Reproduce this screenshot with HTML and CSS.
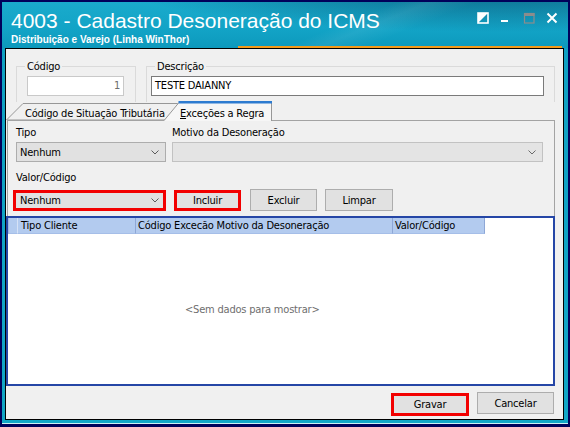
FILE: index.html
```html
<!DOCTYPE html>
<html lang="pt-BR">
<head>
<meta charset="utf-8">
<title>4003 - Cadastro Desoneração do ICMS</title>
<link rel="stylesheet" href="styles.css">
</head>
<body>
<div class="window">
  <header class="titlebar">
    <div class="titles">
      <h1 class="title">4003 - Cadastro Desoneração do ICMS</h1>
      <p class="subtitle">Distribuição e Varejo (Linha WinThor)</p>
    </div>
    <div class="win-controls">
      <svg class="ctl ctl-dock" width="12" height="12" viewBox="0 0 12 12">
        <rect x="1" y="1" width="10" height="10" fill="none" stroke="#fff" stroke-width="1.6"/>
        <polygon points="1,1 11,1 1,11" fill="#fff"/>
      </svg>
      <svg class="ctl ctl-min" width="12" height="12" viewBox="0 0 12 12">
        <rect x="2" y="8" width="7" height="2" fill="#fff"/>
      </svg>
      <svg class="ctl ctl-max" width="12" height="12" viewBox="0 0 12 12">
        <rect x="1.5" y="1.5" width="9.5" height="9.5" fill="none" stroke="#8c8c8c" stroke-width="1.2"/>
        <rect x="1" y="1" width="10.5" height="3" fill="#8c8c8c"/>
      </svg>
      <svg class="ctl ctl-close" width="12" height="12" viewBox="0 0 12 12">
        <path d="M1.5 1.5 L10.5 10.5 M10.5 1.5 L1.5 10.5" stroke="#fff" stroke-width="2" fill="none"/>
      </svg>
    </div>
  </header>

  <main class="client">
    <div class="header-fields">
      <fieldset class="group group-code">
        <legend>Código</legend>
        <div class="edit edit-readonly">1</div>
      </fieldset>
      <fieldset class="group group-desc">
        <legend>Descrição</legend>
        <div class="edit">TESTE DAIANNY</div>
      </fieldset>
    </div>

    <div class="tabstrip">
      <div class="tab tab-first">Código de Situação Tributária</div>
      <div class="tab tab-active"><span class="accel">E</span>xceções a Regra</div>
    </div>

    <section class="tabpage">
      <div class="form-row">
        <div class="field field-tipo">
          <label>Tipo</label>
          <div class="combo"><span>Nenhum</span>
            <svg class="chev" width="8" height="5" viewBox="0 0 8 5"><path d="M0.5 0.5 L4 4 L7.5 0.5" fill="none" stroke="#5a5a5a"/></svg>
          </div>
        </div>
        <div class="field field-motivo">
          <label>Motivo da Desoneração</label>
          <div class="combo combo-disabled"><span></span>
            <svg class="chev" width="8" height="5" viewBox="0 0 8 5"><path d="M0.5 0.5 L4 4 L7.5 0.5" fill="none" stroke="#6a6a6a"/></svg>
          </div>
        </div>
      </div>
      <div class="field field-valor">
        <label>Valor/Código</label>
        <div class="action-row">
          <div class="combo combo-valor hl"><span>Nenhum</span>
            <svg class="chev" width="8" height="5" viewBox="0 0 8 5"><path d="M0.5 0.5 L4 4 L7.5 0.5" fill="none" stroke="#5a5a5a"/></svg>
          </div>
          <button class="btn btn-incluir hl">Incluir</button>
          <button class="btn btn-excluir">Excluir</button>
          <button class="btn btn-limpar">Limpar</button>
        </div>
      </div>
    </section>

    <div class="grid">
      <div class="grid-head">
        <div class="gh gh-ind"></div>
        <div class="gh gh-tipo">Tipo Cliente</div>
        <div class="gh gh-cod">Código Excecão Motivo da Desoneração</div>
        <div class="gh gh-valor">Valor/Código</div>
      </div>
      <div class="grid-body"><span class="empty">&lt;Sem dados para mostrar&gt;</span></div>
    </div>

    <footer class="footer">
      <button class="btn btn-gravar hl">Gravar</button>
      <button class="btn btn-cancelar">Cancelar</button>
    </footer>
  </main>
</div>
</body>
</html>
```

FILE: styles.css
```css
* { box-sizing: border-box; }

html, body { margin: 0; padding: 0; }

body {
  width: 570px;
  height: 427px;
  overflow: hidden;
  background: #00005a;
  font-family: "DejaVu Sans Condensed", "DejaVu Sans", sans-serif;
  font-stretch: semi-condensed;
  font-size: 11px;
  letter-spacing: -0.2px;
  color: #000;
}

/* ---------- window frame ---------- */
.window {
  margin: 2px 2px 0;
  height: 422px;
  display: flex;
  flex-direction: column;
  background: linear-gradient(180deg, #0f9fc2 0%, #12a6c6 100%);
  border-bottom: 1px solid #cdeef6;
}

.titlebar {
  flex: none;
  height: 46px;
  position: relative;
  display: flex;
  justify-content: space-between;
  padding: 9px 0 0 9px;
  color: #fff;
  background:
    linear-gradient(158deg, transparent 58%, rgba(255,255,255,.07) 63%, transparent 70%),
    radial-gradient(110% 170% at 88% -40%, rgba(6,80,112,.85) 0%, rgba(6,80,112,0) 62%),
    linear-gradient(180deg, #1aabcc 0%, #12a3c6 60%, #0d99bc 100%);
}

/* orange accent under the title bar */
.titlebar::after {
  content: "";
  position: absolute;
  left: 236px;
  right: 6px;
  bottom: 0;
  height: 2px;
  background: #f39a1c;
}

.title {
  margin: 0;
  font: 400 21px/20px "Liberation Sans", Arial, sans-serif;
  letter-spacing: 0;
}

.subtitle {
  margin: 3px 0 0;
  font: 700 10px/12px "Liberation Sans", Arial, sans-serif;
  letter-spacing: 0;
}

.win-controls {
  display: flex;
  align-items: flex-start;
  margin: 1px 10px 0 0;
}
.ctl { display: block; }
.ctl-min { margin-left: 10px; }
.ctl-max { margin-left: 12px; }
.ctl-close { margin-left: 11px; }

/* ---------- client area ---------- */
.client {
  flex: none;
  height: 372px;
  margin: 0 4px 0 3px;
  border: 1px solid #000;
  background: #f0f0f0;
  display: flex;
  flex-direction: column;
}

.header-fields {
  flex: none;
  height: 53px;
  display: flex;
  gap: 10px;
  padding: 11px 8px 0 10px;
  overflow: hidden;
}

.group {
  margin: 0;
  padding: 0;
  min-width: 0;
  height: 70px;
  border: 1px solid #dadada;
  border-bottom: none;
}
.group legend {
  margin-left: 8px;
  padding: 0 2px;
  line-height: 13px;
}
.group-code { width: 120px; flex: none; }
.group-desc { flex: 1; }

.edit {
  height: 20px;
  margin-top: 3px;
  border: 1px solid #7a7a7a;
  background: #fff;
  padding: 1px 3px 0;
  line-height: 15px;
  white-space: nowrap;
}
.group-code .edit {
  margin-left: 10px;
  width: 97px;
  border-color: #c9c9c9;
  color: #6d6d6d;
  text-align: right;
}
.group-desc .edit {
  margin-left: 4px;
  width: 393px;
}

/* ---------- tabs ---------- */
.tabstrip {
  flex: none;
  height: 18px;
  display: flex;
  align-items: flex-start;
}

.tab {
  white-space: nowrap;
  line-height: 13px;
  background-repeat: no-repeat;
  background-size: 100% 100%;
}
.tab-first {
  width: 172px;
  height: 18px;
  padding: 5px 0 0 19px;
  background-image: url("data:image/svg+xml,%3Csvg xmlns='http://www.w3.org/2000/svg' width='172' height='18' viewBox='0 0 172 18'%3E%3Cpath d='M0.5 18 L17 1.5 H171.5 V18 Z' fill='%23f0f0f0' stroke='%23979797'/%3E%3C/svg%3E");
}
.tab-active {
  position: relative;
  z-index: 1;
  width: 108px;
  height: 20px;
  margin: -1px 0 0 -14px;
  padding: 6px 0 0 16px;
  background-image: url("data:image/svg+xml,%3Csvg xmlns='http://www.w3.org/2000/svg' width='108' height='20' viewBox='0 0 108 20'%3E%3Cpath d='M0.5 19 L15 1.5 H107.5 V20 H0.5 Z' fill='%23f6f6f6' stroke='none'/%3E%3Cpath d='M0.5 19 L15 1.5 H107.5 V20' fill='none' stroke='%23979797'/%3E%3Cpath d='M14.5 1.2 H108' stroke='%232d7bd0' stroke-width='2.4'/%3E%3C/svg%3E");
}
.accel { text-decoration: underline; }

.tabpage {
  flex: none;
  height: 96px;
  margin: 0 8px 0 1px;
  border: 1px solid #a3a3a3;
  border-bottom: none;
  padding: 5px 0 0 8px;
}

.form-row {
  display: flex;
  gap: 6px;
}
.field label {
  display: block;
  height: 13px;
  line-height: 13px;
}
.field-tipo { width: 150px; }
.field-motivo { width: 371px; }
.field-valor { margin-top: 9px; }

.combo {
  height: 20px;
  margin-top: 3px;
  display: flex;
  align-items: center;
  justify-content: space-between;
  padding: 0 6px 0 3px;
  border: 1px solid #adadad;
  background: #e1e1e1;
  white-space: nowrap;
}
.combo-disabled {
  border-color: #c2c2c2;
  background: #e4e4e4;
}
.chev { display: block; flex: none; }

.action-row {
  display: flex;
  align-items: flex-start;
  margin-top: 5px;
}

.btn {
  font: inherit;
  letter-spacing: inherit;
  color: #000;
  height: 22px;
  padding: 0;
  border: 1px solid #adadad;
  background: #e1e1e1;
  text-align: center;
}

/* red outline around the highlighted controls */
.hl { border: 3px solid #f20000; }

.combo-valor {
  width: 153px;
  height: 21px;
  margin: 1px 0 0 -3px;
  padding: 0 4px 0 4px;
}
.btn-incluir { width: 67px; height: 21px; margin: 1px 0 0 8px; }
.btn-excluir { width: 67px; margin-left: 9px; }
.btn-limpar { width: 68px; margin-left: 8px; }

/* ---------- grid ---------- */
.grid {
  flex: none;
  height: 170px;
  margin-right: 8px;
  border: 2px solid #2546a6;
  background: #fff;
  display: flex;
  flex-direction: column;
}
.grid-head {
  flex: none;
  display: flex;
  height: 16px;
}
.gh {
  height: 16px;
  line-height: 16px;
  padding-left: 3px;
  background: #b3cbef;
  border-right: 1px solid #8ea7d6;
  border-bottom: 1px solid #a5bee8;
  white-space: nowrap;
}
.gh-ind { width: 10px; padding: 0; border-right-color: #d6e2f6; border-left: 1px solid #9fb6e2; }
.gh-tipo { width: 118px; }
.gh-cod { width: 257px; padding-left: 2px; }
.gh-valor { width: 92px; padding-left: 2px; }

.grid-body {
  flex: 1;
  display: flex;
  align-items: center;
  padding-left: 177px;
}
.empty { color: #6e6e6e; }

/* ---------- footer ---------- */
.footer {
  flex: 1;
  display: flex;
  align-items: flex-start;
  justify-content: flex-end;
  padding: 6px 9px 0 0;
}
.btn-gravar { width: 78px; height: 23px; margin-top: 1px; }
.btn-cancelar { width: 77px; margin-left: 8px; }
```
